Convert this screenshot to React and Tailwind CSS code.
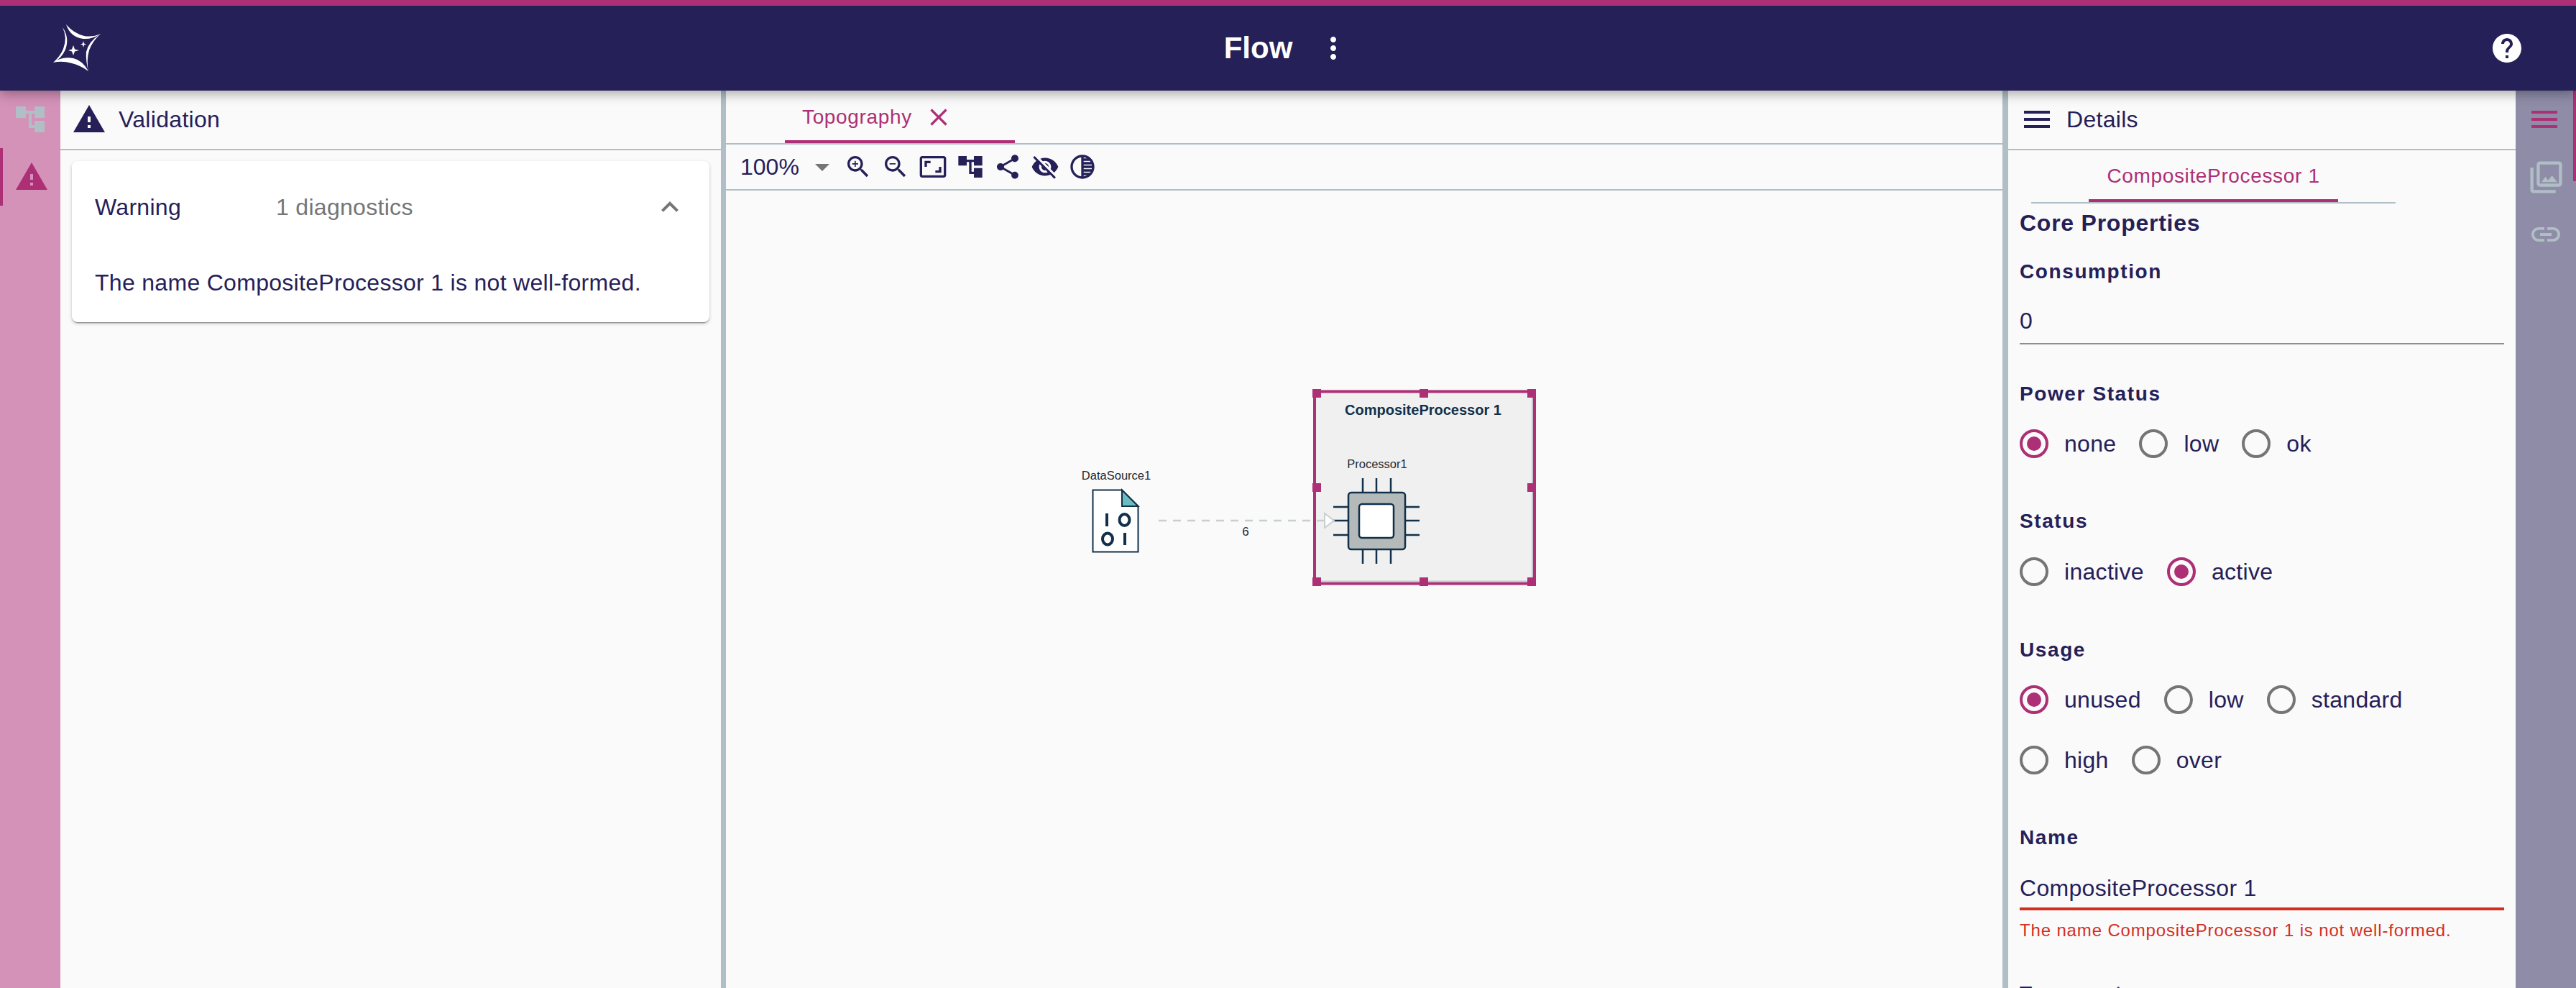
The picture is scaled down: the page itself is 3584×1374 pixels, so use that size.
const icons = {
  warning: "M1 21h22L12 2 1 21zm12-3h-2v-2h2v2zm0-4h-2v-4h2v4z",
  menu: "M3 18h18v-2H3v2zm0-5h18v-2H3v2zm0-7v2h18V6H3z",
  tree: "M22 11V3h-7v3H9V3H2v8h7V8h2v10h4v3h7v-8h-7v3h-2V8h2v3z",
  zoom: "M15.5 14h-.79l-.28-.27C15.41 12.59 16 11.11 16 9.5 16 5.91 13.09 3 9.5 3S3 5.91 3 9.5 5.91 16 9.5 16c1.61 0 3.09-.59 4.23-1.57l.27.28v.79l5 4.99L20.49 19l-4.99-5zm-6 0C7.01 14 5 11.99 5 9.5S7.01 5 9.5 5 14 7.01 14 9.5 11.99 14 9.5 14z",
  plus: "M12 10h-2v2H9v-2H7V9h2V7h1v2h2v1z",
  minus: "M7 9h5v1H7z",
  fit: "M19 12h-2v3h-3v2h5v-5zM7 9h3V7H5v5h2V9zm14-6H3c-1.1 0-2 .9-2 2v14c0 1.1.9 2 2 2h18c1.1 0 2-.9 2-2V5c0-1.1-.9-2-2-2zm0 16.01H3V4.99h18v14.02z",
  share: "M18 16.08c-.76 0-1.44.3-1.96.77L8.91 12.7c.05-.23.09-.46.09-.7s-.04-.47-.09-.7l7.05-4.11c.54.5 1.25.81 2.04.81 1.66 0 3-1.34 3-3s-1.34-3-3-3-3 1.34-3 3c0 .24.04.47.09.7L8.04 9.81C7.5 9.31 6.79 9 6 9c-1.66 0-3 1.34-3 3s1.34 3 3 3c.79 0 1.5-.31 2.04-.81l7.12 4.16c-.05.21-.08.43-.08.65 0 1.61 1.31 2.92 2.92 2.92 1.61 0 2.92-1.31 2.92-2.92s-1.31-2.92-2.92-2.92z",
  eyeOff: "M12 7c2.76 0 5 2.24 5 5 0 .65-.13 1.26-.36 1.83l2.92 2.92c1.51-1.26 2.7-2.89 3.43-4.75-1.73-4.39-6-7.5-11-7.5-1.4 0-2.74.25-3.98.7l2.16 2.16C10.74 7.13 11.35 7 12 7zM2 4.27l2.28 2.28.46.46C3.08 8.3 1.78 10.02 1 12c1.73 4.39 6 7.5 11 7.5 1.55 0 3.03-.3 4.38-.84l.42.42L19.73 22 21 20.73 3.27 3 2 4.27zM7.53 9.8l1.55 1.55c-.05.21-.08.43-.08.65 0 1.66 1.34 3 3 3 .22 0 .44-.03.65-.08l1.55 1.55c-.67.33-1.41.53-2.2.53-2.76 0-5-2.24-5-5 0-.79.2-1.53.53-2.2zm4.31-.78l3.15 3.15.02-.16c0-1.66-1.34-3-3-3l-.17.01z",
  tonality: "M12 2C6.48 2 2 6.48 2 12s4.48 10 10 10 10-4.48 10-10S17.52 2 12 2zm-1 17.93c-3.94-.49-7-3.85-7-7.93s3.05-7.44 7-7.93v15.86zm2-15.86c1.03.13 2 .45 2.87.93H13v-.93zM13 7h5.24c.25.31.48.65.68 1H13V7zm0 3h6.74c.08.33.15.66.19 1H13v-1zm0 9.93V19h2.87c-.87.48-1.84.8-2.87.93zM18.24 17H13v-1h5.92c-.2.35-.43.69-.68 1zm1.5-3H13v-1h6.93c-.04.34-.11.67-.19 1z",
  close: "M19 6.41L17.59 5 12 10.59 6.41 5 5 6.41 10.59 12 5 17.59 6.41 19 12 13.41 17.59 19 19 17.59 13.41 12z",
  more: "M12 8c1.1 0 2-.9 2-2s-.9-2-2-2-2 .9-2 2 .9 2 2 2zm0 2c-1.1 0-2 .9-2 2s.9 2 2 2 2-.9 2-2-.9-2-2-2zm0 6c-1.1 0-2 .9-2 2s.9 2 2 2 2-.9 2-2-.9-2-2-2z",
  chevronUp: "M12 8l-6 6 1.41 1.41L12 10.83l4.59 4.58L18 14z",
  dropDown: "M7 10l5 5 5-5z",
  help: "M12 2C6.48 2 2 6.48 2 12s4.48 10 10 10 10-4.48 10-10S17.52 2 12 2zm1 17h-2v-2h2v2zm2.07-7.75l-.9.92C13.45 12.9 13 13.5 13 15h-2v-.5c0-1.1.45-2.1 1.17-2.83l1.24-1.26c.37-.36.59-.86.59-1.41 0-1.1-.9-2-2-2s-2 .9-2 2H8c0-2.21 1.79-4 4-4s4 1.79 4 4c0 .88-.36 1.68-.93 2.25z",
  photos: "M20 4v12H8V4h12m0-2H8c-1.1 0-2 .9-2 2v12c0 1.1.9 2 2 2h12c1.1 0 2-.9 2-2V4c0-1.1-.9-2-2-2zm-8.5 9.67l1.69 2.26 2.48-3.1L19 15H9zM2 6v14c0 1.1.9 2 2 2h14v-2H4V6H2z",
  link: "M3.9 12c0-1.71 1.39-3.1 3.1-3.1h4V7H7c-2.76 0-5 2.24-5 5s2.24 5 5 5h4v-1.9H7c-1.71 0-3.1-1.39-3.1-3.1zM8 13h8v-2H8v2zm9-6h-4v1.9h4c1.71 0 3.1 1.39 3.1 3.1s-1.39 3.1-3.1 3.1h-4V17h4c2.76 0 5-2.24 5-5s-2.24-5-5-5z",
};

function MuiIcon({ d, className = "", extra }) {
  return (
    <svg viewBox="0 0 24 24" fill="currentColor" className={`shrink-0 ${className}`}>
      <path d={d} />
      {extra && <path d={extra} />}
    </svg>
  );
}

function Logo() {
  return (
    <svg viewBox="70 30 74 74" className="h-[74px] w-[74px] shrink-0" fill="#fff">
      <path d="M92 34Q102 46 117 50Q129 52 140 47Q128 55 116 54Q98 52 92 34Z" />
      <path d="M87 38Q94 52 88 68Q84 78 74 87Q85 82 91 69Q97 52 87 38Z" />
      <path d="M74 87Q86 78 102 81Q115 84 123 99Q112 91 100 88Q86 84 74 87Z" />
      <path d="M140 47Q128 58 124 70Q120 84 123 99Q119 84 120 72Q123 58 140 47Z" />
      <path d="M102 63L104 68.500L110 70L104 71.500L102 77L100 71.500L95 70L100 68.500Z" />
      <path d="M116 57L117 60.500L120 61.500L117 62.500L116 66L115 62.500L112 61.500L115 60.500Z" />
    </svg>
  );
}

function Radio({ label, checked }) {
  return (
    <div className="flex items-center gap-[22px]">
      <span
        className={`flex h-10 w-10 items-center justify-center rounded-full border-4 ${
          checked ? "border-[#ad2f75]" : "border-[#757575]"
        }`}
      >
        {checked && <span className="h-5 w-5 rounded-full bg-[#ad2f75]" />}
      </span>
      <span className="text-[32px] tracking-[0.3px]">{label}</span>
    </div>
  );
}

function FieldLabel({ children, className = "" }) {
  return (
    <div className={`flex h-10 items-center text-[28px] font-bold tracking-[1.6px] ${className}`}>
      {children}
    </div>
  );
}

function RadioRow({ options, checked, className = "" }) {
  return (
    <div className={`flex h-[60px] items-center gap-8 ${className}`}>
      {options.map((option) => (
        <Radio key={option} label={option} checked={option === checked} />
      ))}
    </div>
  );
}

function Diagram() {
  const ink = "#12304a";
  const handles = [
    [1826, 541], [1975, 541], [2125, 541],
    [1826, 672], [2125, 672],
    [1826, 803], [1975, 803], [2125, 803],
  ];
  const font = { fontFamily: "'Liberation Sans', sans-serif" };
  return (
    <svg
      viewBox="1500 530 660 300"
      className="absolute left-[490px] top-[265px] h-[300px] w-[660px]"
    >
      {/* data source */}
      <text x="1553" y="667" textAnchor="middle" fontSize="16.500" fill="#1f2a33" style={font}>DataSource1</text>
      <path d="M1520.500 681.500H1561L1583.500 704V767.500H1520.500Z" fill="#fff" stroke={ink} strokeWidth="2" />
      <path d="M1561 681.500L1583.500 704H1561Z" fill="#6bbcc0" stroke={ink} strokeWidth="2" />
      <g fill="none" stroke={ink} strokeWidth="4">
        <path d="M1540 714V732M1565 741V758" />
        <ellipse cx="1564.500" cy="723" rx="7" ry="8" />
        <ellipse cx="1541" cy="749.500" rx="7" ry="8" />
      </g>

      {/* composite node */}
      <rect x="1829" y="544.500" width="306" height="267" fill="#f0f0f0" stroke="#ad2f75" strokeWidth="4" />
      <path d="M2132 547V808.500H1832" fill="none" stroke="#c4c8ca" strokeWidth="2" />
      {handles.map(([x, y]) => (
        <rect key={`${x}-${y}`} x={x} y={y} width="12" height="12" fill="#ad2f75" />
      ))}
      <text x="1980" y="577" textAnchor="middle" fontSize="20" fontWeight="700" fill={ink} style={font}>CompositeProcessor 1</text>
      <text x="1916" y="651" textAnchor="middle" fontSize="16.500" fill="#1f2a33" style={font}>Processor1</text>

      {/* chip */}
      <g stroke={ink} strokeWidth="2.500">
        <path d="M1896 665V685M1915 665V685M1935 665V685M1896 764V784M1915 764V784M1935 764V784" />
        <path d="M1855 705H1875M1855 724H1875M1855 744H1875M1955 705H1975M1955 724H1975M1955 744H1975" />
      </g>
      <rect x="1876" y="685" width="79" height="79" rx="4" fill="#b4baba" stroke={ink} strokeWidth="2.500" />
      <rect x="1891" y="701" width="48" height="47" rx="4" fill="#fff" stroke={ink} strokeWidth="2.500" />

      {/* edge */}
      <path d="M1612 724H1843" stroke="#c8cfd0" strokeWidth="2.500" strokeDasharray="11 9" fill="none" />
      <path d="M1843 714L1856 724L1843 734Z" fill="#fff" stroke="#c8cfd0" strokeWidth="2" />
      <text x="1733" y="745" textAnchor="middle" fontSize="17" fill="#1f2a33" style={font}>6</text>
    </svg>
  );
}

export default function App() {
  return (
    <div
      className="flex h-[1374px] w-[3584px] flex-col overflow-hidden bg-[#fafafa] text-[#252058]"
      style={{ fontFamily: "'Liberation Sans', Arial, sans-serif" }}
    >
      <header className="relative z-10 flex h-[126px] shrink-0 items-center border-t-8 border-[#ad2f75] bg-[#252058] text-white shadow-[0_4px_16px_rgba(0,0,0,0.35)]">
        <div className="flex flex-1 items-center pl-[70px]">
          <Logo />
        </div>
        <div className="flex items-center gap-[33px]">
          <span className="text-[42px] font-bold leading-none">Flow</span>
          <MuiIcon d={icons.more} className="h-12 w-12" />
        </div>
        <div className="flex flex-1 items-center justify-end pr-[72px]">
          <MuiIcon d={icons.help} className="h-12 w-12" />
        </div>
      </header>

      <div className="flex min-h-0 flex-1">
        {/* left rail */}
        <nav className="w-[84px] shrink-0 bg-[#d492b8]">
          <MuiIcon d={icons.tree} className="ml-[18px] mt-4 h-12 w-12 text-[#b0bec5]" />
          <div className="mt-4 flex h-20 items-center border-l-4 border-[#ad2f75] pl-4">
            <MuiIcon d={icons.warning} className="h-12 w-12 text-[#ad2f75]" />
          </div>
        </nav>

        {/* validation panel */}
        <section className="flex w-[919px] shrink-0 flex-col">
          <div className="flex h-[83px] items-center gap-[17px] border-b-2 border-[#b0bec5] pb-[2px] pl-4">
            <MuiIcon d={icons.warning} className="h-12 w-12" />
            <span className="text-[32px] tracking-[0.3px]">Validation</span>
          </div>
          <div className="mx-4 mt-[15px] h-[224px] rounded-lg bg-white pl-8 pr-[31px] shadow-[0_2px_2px_-1px_rgba(0,0,0,0.4),0_2px_4px_0_rgba(0,0,0,0.12),0_2px_6px_0_rgba(0,0,0,0.08)]">
            <div className="flex h-[128px] items-center text-[32px] tracking-[0.3px]">
              <span className="w-[252px]">Warning</span>
              <span className="text-[#757575]">1 diagnostics</span>
              <MuiIcon d={icons.chevronUp} className="ml-auto h-12 w-12 text-[#757575]" />
            </div>
            <p className="mt-5 text-[32px] leading-[42px] tracking-[0.3px]">
              The name CompositeProcessor 1 is not well-formed.
            </p>
          </div>
        </section>

        <div className="w-[7px] shrink-0 bg-[#b0bec5]" />

        {/* topography */}
        <main className="flex w-[1776px] shrink-0 flex-col">
          <div className="flex h-[75px] border-b-2 border-[#b0bec5] pl-[82px]">
            <div className="flex h-[73px] w-[320px] items-center gap-[17px] border-b-4 border-[#ad2f75] pl-6 pt-1 text-[#ad2f75]">
              <span className="text-[28px] tracking-[0.65px]">Topography</span>
              <MuiIcon d={icons.close} className="h-10 w-10" />
            </div>
          </div>
          <div className="flex h-[64px] items-center border-b-2 border-[#b0bec5] pl-5">
            <span className="w-[90px] text-[32px]">100%</span>
            <MuiIcon d={icons.dropDown} className="mr-[6px] h-12 w-12 text-[#757575]" />
            <div className="flex items-center gap-3">
              <MuiIcon d={icons.zoom} extra={icons.plus} className="h-10 w-10" />
              <MuiIcon d={icons.zoom} extra={icons.minus} className="h-10 w-10" />
              <MuiIcon d={icons.fit} className="h-10 w-10" />
              <MuiIcon d={icons.tree} className="h-10 w-10" />
              <MuiIcon d={icons.share} className="h-10 w-10" />
              <MuiIcon d={icons.eyeOff} className="h-10 w-10" />
              <MuiIcon d={icons.tonality} className="h-10 w-10" />
            </div>
          </div>
          <div className="relative flex-1">
            <Diagram />
          </div>
        </main>

        <div className="w-2 shrink-0 bg-[#b0bec5]" />

        {/* details */}
        <aside className="w-[706px] shrink-0 overflow-hidden">
          <div className="flex h-[83px] items-center gap-[17px] border-b-2 border-[#b0bec5] pb-[2px] pl-[16px]">
            <MuiIcon d={icons.menu} className="h-12 w-12" />
            <span className="text-[32px] tracking-[0.3px]">Details</span>
          </div>
          <div className="ml-8 flex h-[74px] w-[507px] justify-center border-b-2 border-[#b0bec5]">
            <div className="flex h-[72px] w-[347px] items-center justify-center border-b-4 border-[#ad2f75] pt-1 text-[28px] tracking-[0.65px] text-[#ad2f75]">
              CompositeProcessor 1
            </div>
          </div>
          <div className="px-4">
            <div className="flex h-[54px] items-center text-[32px] font-bold tracking-[0.75px]">
              Core Properties
            </div>
            <FieldLabel className="mt-[21px]">Consumption</FieldLabel>
            <div className="flex h-[81px] items-center border-b-2 border-[#8e8e8e] pt-4 text-[32px]">0</div>

            <FieldLabel className="mt-[49px]">Power Status</FieldLabel>
            <RadioRow className="mt-[19px]" options={["none", "low", "ok"]} checked="none" />

            <FieldLabel className="mt-[58px]">Status</FieldLabel>
            <RadioRow className="mt-5" options={["inactive", "active"]} checked="active" />

            <FieldLabel className="mt-[59px]">Usage</FieldLabel>
            <RadioRow className="mt-[19px]" options={["unused", "low", "standard"]} checked="unused" />
            <RadioRow className="mt-6" options={["high", "over"]} />

            <FieldLabel className="mt-[58px]">Name</FieldLabel>
            <div className="flex h-[81px] items-center border-b-4 border-[#d32f1f] pt-[22px] text-[32px] tracking-[0.3px]">
              CompositeProcessor 1
            </div>
            <div className="mt-2 flex h-10 items-center text-[24px] tracking-[0.85px] text-[#d32f1f]">
              The name CompositeProcessor 1 is not well-formed.
            </div>
            <FieldLabel className="mt-12">Transport</FieldLabel>
          </div>
        </aside>

        {/* right rail */}
        <nav className="relative w-[84px] shrink-0 bg-[#8f8ca8] pt-4">
          <div className="absolute right-0 top-0 h-[126px] w-1 bg-[#ad2f75]" />
          <MuiIcon d={icons.menu} className="ml-4 h-12 w-12 text-[#ad2f75]" />
          <MuiIcon d={icons.photos} className="ml-4 mt-[30px] h-[53px] w-[53px] text-[#b0bec5]" />
          <MuiIcon d={icons.link} className="ml-[18px] mt-[29px] h-12 w-12 text-[#b0bec5]" />
        </nav>
      </div>
    </div>
  );
}
